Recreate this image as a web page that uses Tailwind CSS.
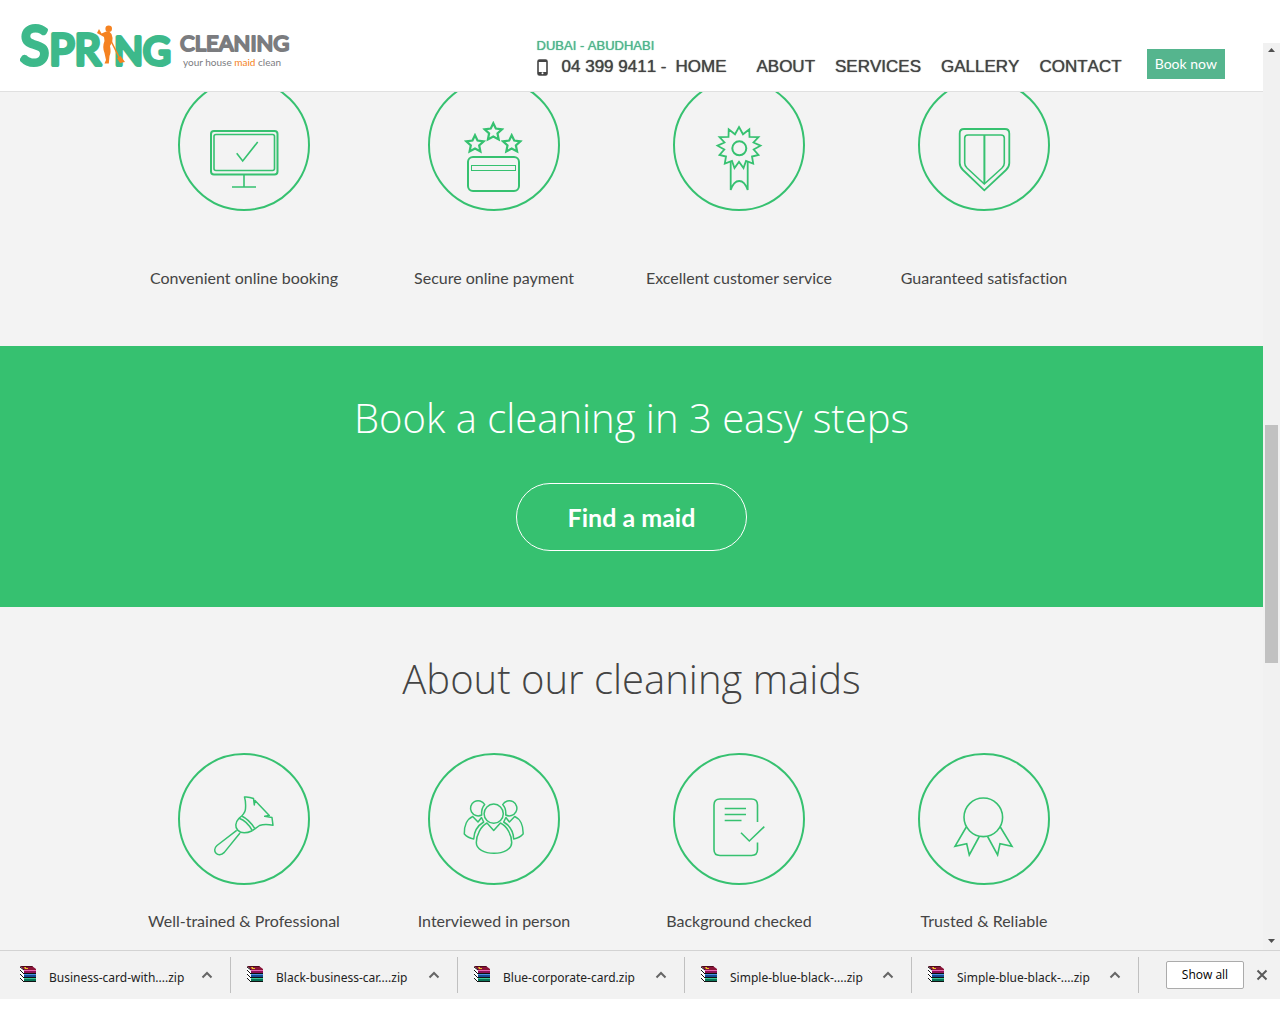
<!DOCTYPE html>
<html lang="en">
<head>
    <meta charset="UTF-8">
    <meta name="viewport" content="width=device-width, initial-scale=1.0">
    <title>Spring Cleaning | Your house maid clean</title>
    <script src="https://cdn.jsdelivr.net/npm/@tailwindcss/browser@4"></script>
</head>
<body class="bg-white min-h-screen font-['Lato',sans-serif] text-[#444]">
    <!-- Shared symbols -->
    <svg class="hidden">
        <symbol id="zip" viewBox="0 0 16 16">
            <path d="M0 1l4 3v12l-4-4z" fill="#fff"/>
            <path d="M0 0h12l4 3v1H4z" fill="#8a1238"/>
            <path d="M0 0h12l1 1H2z" fill="#4a0a1a"/>
            <path d="M4 1h2v1h2v1H5z" fill="#e8c227"/>
            <path d="M4 4h12v12H4z" fill="#111"/>
            <path d="M4 4h12v1H4z" fill="#e868b4"/>
            <path d="M4 5h12v2H4z" fill="#8c1058"/>
            <path d="M4 8h12v1H4z" fill="#4a90e0"/>
            <path d="M4 9h12v2H4z" fill="#154a94"/>
            <path d="M4 12h12v1H4z" fill="#3fc898"/>
            <path d="M4 13h12v2H4z" fill="#0b7458"/>
            <path d="M0 1l4 3M0 4l4 4M0 8l4 4M0 12l4 4" fill="none" stroke="#111"/>
        </symbol>
        <symbol id="chevron" viewBox="0 0 12 8">
            <path d="M1.5 6.5L6 2l4.5 4.5" fill="none" stroke="#666" stroke-width="2"/>
        </symbol>
        <symbol id="star" viewBox="-10 -10 20 20">
            <path d="M0-8l2.3 4.9 5.6.7-4.1 3.6 1.1 5.6L0 4.1l-4.9 2.7 1.1-5.6-4.1-3.6 5.6-.7z" fill="none" stroke="#36c170" stroke-width="2"/>
        </symbol>
    </svg>

    <div class="flex">
        <div class="flex-1 min-w-0">
            <!-- Header -->
            <header class="relative z-10 h-[92px] bg-white border-b border-[#e0e0e0] flex items-start justify-between pl-5 pr-[38px]">
                <a href="#" aria-label="Spring Cleaning">
                    <svg width="280" height="80" viewBox="0 -20 280 80" font-family="Lato,sans-serif">
                        <g fill="#3db98b" stroke="#3db98b" stroke-width="4" stroke-linejoin="round">
                            <text x="0" y="45" font-size="42"><tspan font-size="54">S</tspan>PR</text>
                            <text x="94" y="45" font-size="38">NG</text>
                        </g>
                        <!-- Maid with a mop -->
                        <g fill="#f58220">
                            <circle cx="88.7" cy="8.8" r="3.3"/>
                            <path d="M79 9l2.5 4.5L85 12q4-2 6.5 2 1.8 4 .7 8L90 26q1.3 6-.5 10l-.7 7.5H84.5L86 40l-1.5-7q-2.5-6 0-12L84 17l-7-4z"/>
                            <path d="M91 21l8 16" stroke="#f58220" stroke-width="1.5"/>
                            <path d="M97 38l3.5-2 4.5 6-5 1z"/>
                        </g>
                        <text x="160" y="31" fill="#7b7c7f" stroke="#7b7c7f" stroke-width="2" stroke-linejoin="round" font-size="22">CLEANING</text>
                        <text x="163" y="46" fill="#7b7c7f" font-size="10">your house <tspan fill="#f58220">maid</tspan> clean</text>
                    </svg>
                </a>
                <div class="flex items-start font-['Liberation_Sans',Arial,sans-serif] [font-kerning:none] text-[17px] leading-5">
                    <div class="mt-[38px] mr-[9px]">
                        <p class="text-[13px] leading-4 text-[#4fb48c] [text-shadow:0_0_1px_#4fb48c]">DUBAI - ABUDHABI</p>
                        <p class="flex items-center mt-[3px] [text-shadow:0_0_1px_#444]">
                            <svg class="mr-[14px]" width="11" height="17" viewBox="0 0 11 17">
                                <rect x="1" y="1" width="9" height="15" rx="1.5" fill="#fff" stroke="#444" stroke-width="1.6"/>
                                <path d="M1 1h9v2H1zM1 13h9v3H1z" fill="#444"/>
                                <circle cx="5.5" cy="14.3" r="1" fill="#fff"/>
                            </svg>
                            04 399 9411 -
                        </p>
                    </div>
                    <nav class="mt-[57px] mr-[25px] flex gap-5 [text-shadow:0_0_1px_#444]">
                        <a href="#" class="mr-[10px]">HOME</a>
                        <a href="#">ABOUT</a>
                        <a href="#">SERVICES</a>
                        <a href="#">GALLERY</a>
                        <a href="#">CONTACT</a>
                    </nav>
                    <button class="mt-[49px] h-[30px] px-2 bg-[#55b58e] text-white font-['Lato',sans-serif] text-sm">Book now</button>
                </div>
            </header>

            <main class="bg-[#f3f3f3] [font-variant-ligatures:none]">
                <!-- Benefits, scrolled partly under the header -->
                <section class="-mt-[13px] pb-14">
                    <div class="max-w-[1030px] mx-auto pr-10 grid grid-cols-[255fr_245fr_245fr_245fr] text-center text-base leading-6">
                        <div>
                            <svg class="mx-auto mb-[55px]" width="132" height="132" viewBox="0 0 132 132" fill="none" stroke="#36c170" stroke-width="2">
                                <circle cx="66" cy="66" r="65"/>
                                <rect x="33" y="52" width="66.5" height="43.5" rx="3"/>
                                <rect x="36" y="55.5" width="60.5" height="36" rx="2" stroke-width="1.6"/>
                                <path d="M66 95v13M54 108h24M58.7 74.3l6 7.7 15-19" stroke-width="1.6"/>
                            </svg>
                            <p>Convenient online booking</p>
                        </div>
                        <div>
                            <svg class="mx-auto mb-[55px]" width="132" height="132" viewBox="0 0 132 132" fill="none" stroke="#36c170" stroke-width="2">
                                <circle cx="66" cy="66" r="65"/>
                                <use href="#star" x="54.3" y="42" width="22" height="22"/>
                                <use href="#star" x="36" y="54" width="22" height="22"/>
                                <use href="#star" x="72.7" y="54" width="22" height="22"/>
                                <rect x="40" y="78" width="51" height="34" rx="5"/>
                                <rect x="43.5" y="86.5" width="44" height="5" stroke-width="1"/>
                            </svg>
                            <p>Secure online payment</p>
                        </div>
                        <div>
                            <svg class="mx-auto mb-[55px]" width="132" height="132" viewBox="0 0 132 132" fill="none" stroke="#36c170" stroke-width="2">
                                <circle cx="66" cy="66" r="65"/>
                                <circle cx="66.3" cy="69.3" r="7"/>
                                <path d="M66 48l4 7.3 6.3-5 .2 7.5 9 .2-5 5.5 7 3.2-6.8 3.8 4.8 5.5-6.5 1.5 1.2 7.2-7.2-2.7-2.5 7-4.5-6.3-4.5 6.3-2.5-7-7.2 2.7 1.2-7.2-6.5-1.5 4.8-5.5-6.8-3.8 7-3.2-5-5.5 9-.2.2-7.5 6.3 5z" stroke-width="1.8"/>
                                <path d="M57.7 82v29q3-9 8.5-9t8.5 9V82" stroke-width="1.8"/>
                            </svg>
                            <p>Excellent customer service</p>
                        </div>
                        <div>
                            <svg class="mx-auto mb-[55px]" width="132" height="132" viewBox="0 0 132 132" fill="none" stroke="#36c170" stroke-width="2">
                                <circle cx="66" cy="66" r="65"/>
                                <path d="M46 50h41Q91.3 50 91.3 54.5V84Q91.3 88 88 91L66.3 111.3 45 91Q41.7 88 41.7 84V54.5Q41.7 50 46 50z" stroke-width="1.8"/>
                                <path d="M50 56h33Q86.3 56 86.3 59V84Q86.3 87 84 89L66.3 105 49 89Q46.7 87 46.7 84V59Q46.7 56 50 56z" stroke-width="1.6"/>
                                <path d="M66.4 56v48"/>
                            </svg>
                            <p>Guaranteed satisfaction</p>
                        </div>
                    </div>
                </section>

                <!-- Call to action -->
                <section class="bg-[#36c170] text-white text-center pt-11 pb-14">
                    <h2 class="font-['Open_Sans',sans-serif] font-light text-[40px] leading-14 mb-[37px]">Book a cleaning in 3 easy steps</h2>
                    <button class="h-[68px] px-[51px] pt-[2px] border border-white rounded-full text-[25px] font-bold">Find a maid</button>
                </section>

                <!-- About the maids -->
                <section class="pt-11 pb-[17px]">
                    <h2 class="text-center font-['Open_Sans',sans-serif] font-light text-[40px] leading-14 mb-[46px]">About our cleaning maids</h2>
                    <div class="max-w-[1030px] mx-auto pr-10 grid grid-cols-[255fr_245fr_245fr_245fr] text-center text-base leading-6">
                        <div>
                            <svg class="mx-auto mb-6" width="132" height="132" viewBox="0 0 132 132" fill="none" stroke="#36c170" stroke-width="1.5" stroke-linejoin="round">
                                <circle cx="66" cy="66" r="65" stroke-width="2"/>
                                <g transform="translate(0 -9)">
                                    <path d="M58.7 86.3L39 101.5C33 107 40 114.5 46.3 108.4L62 89"/>
                                    <path d="M61 74.3C53 83 61 93 74.3 86.7M61 74.3Q69 77 74.3 86.7M63.7 72Q71 75.5 76.7 84.3"/>
                                    <path d="M61 74.3L63.7 72Q67.5 68 67.5 64.5 68 58 66.5 53Q71 52.5 75.5 54.5L76.3 61 77 56.5 91.3 71.5 86.7 72.3 94 73.5 95 81.3Q87 79.5 81.5 81.5L74.3 86.7"/>
                                </g>
                            </svg>
                            <p>Well-trained &amp; Professional</p>
                        </div>
                        <div>
                            <svg class="mx-auto mb-6" width="132" height="132" viewBox="0 0 132 132" fill="none" stroke="#36c170" stroke-width="1.5" stroke-linejoin="round">
                                <circle cx="66" cy="66" r="65" stroke-width="2"/>
                                <g transform="translate(0 -9)">
                                    <circle cx="65.7" cy="69.7" r="9.6"/>
                                    <path d="M59 79L65.7 86.5 72.4 79C79 82 83.7 91 83.7 98.5 83.7 105 76 109.3 66 109.3S48.3 105 48.3 98.5C48.3 91 53 82 59 79z"/>
                                    <path id="sitter" d="M56.7 60.5A7.6 7.6 0 1 0 53.7 71Q53 64.5 56.7 60.5zM44.7 72.5L50 78 53.5 73.5 55.7 78C49 82 46 88 45.7 95Q40 94 36.3 90C36 82 39 75 44.7 72.5z"/>
                                    <use href="#sitter" transform="translate(131.4 0) scale(-1 1)"/>
                                </g>
                            </svg>
                            <p>Interviewed in person</p>
                        </div>
                        <div>
                            <svg class="mx-auto mb-6" width="132" height="132" viewBox="0 0 132 132" fill="none" stroke="#36c170" stroke-width="1.6">
                                <circle cx="66" cy="66" r="65" stroke-width="2"/>
                                <g transform="translate(0 -9)">
                                    <path d="M84.5 78V61Q84.5 55 78.5 55H47Q41 55 41 61V105.5Q41 111.5 47 111.5H78.5Q84.5 111.5 84.5 105.5V98.5"/>
                                    <path d="M51.7 64.5H73M51.7 70.5H73M51.7 76.5H68.5M68 88.7L76.3 97 91.3 82.7"/>
                                </g>
                            </svg>
                            <p>Background checked</p>
                        </div>
                        <div>
                            <svg class="mx-auto mb-6" width="132" height="132" viewBox="0 0 132 132" fill="none" stroke="#36c170" stroke-width="1.6">
                                <circle cx="66" cy="66" r="65" stroke-width="2"/>
                                <g transform="translate(0 -9)">
                                    <circle cx="65.3" cy="73.3" r="19.3"/>
                                    <path d="M48.3 83L37 102.3 48.7 99.7 51.3 111 61.3 92.5M82.3 83L94 102.3 82 99.7 79.6 111 69.6 92.5"/>
                                </g>
                            </svg>
                            <p>Trusted &amp; Reliable</p>
                        </div>
                    </div>
                </section>
            </main>
        </div>

        <!-- Scrollbar -->
        <div class="w-[17px] mt-[43px] bg-[#f1f1f1] flex flex-col items-center">
            <svg class="h-[17px]" width="7" viewBox="0 0 7 17"><path d="M0 9l3.5-4L7 9z" fill="#505050"/></svg>
            <div class="grow-[365]"></div>
            <div class="grow-[238] w-[13px] bg-[#c1c1c1]"></div>
            <div class="grow-[270]"></div>
            <svg class="h-[17px]" width="7" viewBox="0 0 7 17"><path d="M0 6l3.5 4L7 6z" fill="#505050"/></svg>
        </div>
    </div>

    <!-- Downloads bar -->
    <footer class="h-[49px] bg-[#f2f2f2] border-t border-[#d3d3d3] flex items-center pl-1 pr-3 font-['Open_Sans',sans-serif] text-xs text-[#222]">
        <div class="w-[227px] h-9 pl-4 pr-[17px] border-r border-[#c0c0c0] flex items-center">
            <svg class="mr-[13px] mb-[2px]" width="16" height="16"><use href="#zip"/></svg>
            <span class="flex-1 mt-[6px] whitespace-nowrap font-['Noto_Sans',sans-serif]">Business-card-with....zip</span>
            <svg width="12" height="8"><use href="#chevron"/></svg>
        </div>
        <div class="w-[227px] h-9 pl-4 pr-[17px] border-r border-[#c0c0c0] flex items-center">
            <svg class="mr-[13px] mb-[2px]" width="16" height="16"><use href="#zip"/></svg>
            <span class="flex-1 mt-[6px] whitespace-nowrap font-['Noto_Sans',sans-serif]">Black-business-car....zip</span>
            <svg width="12" height="8"><use href="#chevron"/></svg>
        </div>
        <div class="w-[227px] h-9 pl-4 pr-[17px] border-r border-[#c0c0c0] flex items-center">
            <svg class="mr-[13px] mb-[2px]" width="16" height="16"><use href="#zip"/></svg>
            <span class="flex-1 mt-[6px] whitespace-nowrap font-['Noto_Sans',sans-serif]">Blue-corporate-card.zip</span>
            <svg width="12" height="8"><use href="#chevron"/></svg>
        </div>
        <div class="w-[227px] h-9 pl-4 pr-[17px] border-r border-[#c0c0c0] flex items-center">
            <svg class="mr-[13px] mb-[2px]" width="16" height="16"><use href="#zip"/></svg>
            <span class="flex-1 mt-[6px] whitespace-nowrap font-['Noto_Sans',sans-serif]">Simple-blue-black-....zip</span>
            <svg width="12" height="8"><use href="#chevron"/></svg>
        </div>
        <div class="w-[227px] h-9 pl-4 pr-[17px] border-r border-[#c0c0c0] flex items-center">
            <svg class="mr-[13px] mb-[2px]" width="16" height="16"><use href="#zip"/></svg>
            <span class="flex-1 mt-[6px] whitespace-nowrap font-['Noto_Sans',sans-serif]">Simple-blue-black-....zip</span>
            <svg width="12" height="8"><use href="#chevron"/></svg>
        </div>
        <button class="ml-auto w-[78px] h-7 bg-white border border-[#ababab] rounded-xs text-black">Show all</button>
        <button class="ml-3" aria-label="Close">
            <svg width="12" height="12" viewBox="0 0 12 12"><path d="M1.5 1.5l9 9M10.5 1.5l-9 9" stroke="#5a5a5a" stroke-width="2"/></svg>
        </button>
    </footer>
</body>
</html>
